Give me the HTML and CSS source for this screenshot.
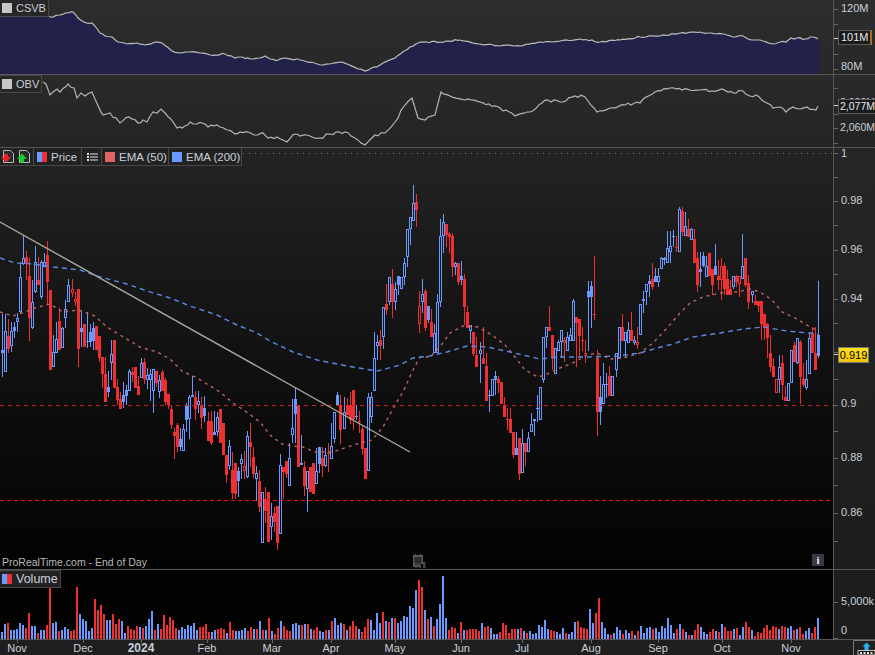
FILE: index.html
```html
<!DOCTYPE html>
<html>
<head>
    <title>ProRealTime Chart</title>
    <link rel="stylesheet" href="styles.css">
</head>
<body>
    <div class="chart">
        <section class="panel panel-csvb">
            <div class="plot">
                <svg id="csvb-plot" width="833" height="74" viewBox="0 0 833 74"></svg>
                <div class="legend legend-csvb"><span class="swatch swatch-grey"></span><span>CSVB</span></div>
            </div>
            <div class="scale" id="csvb-scale"></div>
        </section>

        <section class="panel panel-obv">
            <div class="plot">
                <svg id="obv-plot" width="833" height="72" viewBox="0 75 833 72"></svg>
                <div class="legend legend-obv"><span class="swatch swatch-grey"></span><span>OBV</span></div>
            </div>
            <div class="scale scale-obv" id="obv-scale"></div>
        </section>

        <section class="panel panel-price">
            <div class="plot">
                <svg id="price-plot" width="833" height="421" viewBox="0 148 833 421"></svg>
                <div class="toolbar">
                    <div class="tool-cell tool-icons">
                        <svg width="13" height="13" viewBox="0 0 13 13"><path d="M2.500 .5h7l3 3v9h-10z" fill="#2a2a2a" stroke="#b8b8b8"/><path d="M3 4h4v3h3l-5 5.500-5-5.500h3z" fill="#f0202a"/></svg>
                        <svg width="13" height="13" viewBox="0 0 13 13"><path d="M2.500 .5h7l3 3v9h-10z" fill="#2a2a2a" stroke="#b8b8b8"/><path d="M5 3.500l5 5.500h-3v3.500h-4v-3.500h-3z" fill="#12d02a"/></svg>
                    </div>
                    <div class="tool-cell tool-price"><span class="swatch swatch-split"></span><span>Price</span></div>
                    <div class="tool-cell tool-list">
                        <svg width="11" height="8" viewBox="0 0 11 8"><path d="M0 0h2v2h-2zM3 .5h8v1h-8zM0 3h2v2h-2zM3 3.500h8v1h-8zM0 6h2v2h-2zM3 6.500h8v1h-8z" fill="#e0e0e0"/></svg>
                    </div>
                    <div class="tool-cell tool-ema50"><span class="swatch swatch-ema50"></span><span>EMA (50)</span></div>
                    <div class="tool-cell tool-ema200"><span class="swatch swatch-ema200"></span><span>EMA (200)</span></div>
                </div>
                <div class="source">ProRealTime.com - End of Day</div>
                <svg class="calendar-icon" width="13" height="14" viewBox="0 0 13 14">
                    <path d="M0 1h2v-1h1v1h4v-1h1v1h2v9h-3v3h-7z" fill="#5a5a5a"/>
                    <path d="M1 4h8M1 6h8M1 8h8M3 3v8M5 3v8M7 3v8" stroke="#0a0a0a" stroke-width=".7"/>
                    <path d="M2 11h2v3h-2zM6 10h2v4h-2zM10 8h2.500v6h-2.500z" fill="#444"/>
                </svg>
                <div class="info-icon">i</div>
            </div>
            <div class="scale" id="price-scale"></div>
        </section>

        <section class="panel panel-volume">
            <div class="plot">
                <svg id="volume-plot" width="833" height="69" viewBox="0 570 833 69"></svg>
                <div class="legend legend-volume"><span class="swatch swatch-split"></span><span>Volume</span></div>
            </div>
            <div class="scale" id="volume-scale"></div>
        </section>

        <div class="time-axis" id="time-axis">
            <svg class="corner-icon" width="22" height="15" viewBox="0 0 22 15">
                <path d="M.5 15v-14.500h21.500" fill="none" stroke="#777"/>
                <path d="M13.500 2.500l4 4h-2v4h-4v-4h-2z" fill="#2ab4f0"/>
                <path d="M5 10.500h17v4.500h-17z" fill="#111" stroke="#ccc"/>
                <path d="M7 12h2v2h-2zM10.500 12h2v2h-2zM14 12h2v2h-2zM17.500 12h2v2h-2z" fill="#e8e8e8"/>
            </svg>
        </div>
    </div>
    <script src="chart.js"></script>
</body>
</html>
```

FILE: styles.css
```css
body { margin: 0; background: #1e1e1e; font-family: "Liberation Sans", Arial, sans-serif; font-size: 11px; color: #c8d0da; overflow: hidden; }
svg { display: block; }

.chart { width: 875px; height: 655px; display: flex; flex-direction: column; overflow: hidden; }
.panel { display: flex; flex: none; border-bottom: 1px solid #565656; }
.panel-csvb { height: 74px; background: linear-gradient(#2d2d2d, #282828); }
.panel-obv { height: 72px; background: linear-gradient(#2a2a2a, #242424); }
.panel-price { height: 421px; }
.panel-volume { height: 69px; }

.plot { position: relative; width: 833px; flex: none; border-right: 1px solid #565656; }
.panel-price .plot { background: linear-gradient(#242424, #1a1a1a 25%, #0c0c0c 65%, #030303); }
.panel-volume .plot { background: #030303; }
.scale { position: relative; flex: 1; overflow: hidden; }
.panel-price .scale { background: linear-gradient(#262626, #1d1d1d); }
.panel-volume .scale { background: #1d1d1d; }

.scale-label { position: absolute; left: 7px; white-space: nowrap; line-height: 14px; }
.scale-obv .scale-label { font-size: 10.500px; left: 6px; }
.scale-tick { position: absolute; left: 0; width: 4px; height: 1px; background: #666; }
.scale-tick-now { width: 5px; background: #d8d8d8; }
.scale-box { position: absolute; left: 4px; height: 13px; line-height: 13px; padding: 0 1px 0 2px; background: #1b1b1b; border: 1px solid #5c5c5c; color: #e4e8ee; white-space: nowrap; }
.scale-box-mark { border-right: 2px solid #b46a1e; }
.scale-obv .scale-box { font-size: 10.500px; padding: 0 0 0 1px; border-right: none; }
.scale-box-price { height: 14px; line-height: 14px; padding: 0; width: 29px; text-align: center; background: linear-gradient(#ffe21a, #f2c400); border-color: #7a7a7a; color: #000; }

.legend { position: absolute; left: 0; display: flex; align-items: center; gap: 4px; height: 16px; padding: 0 2px; background: #272727; border: 1px solid #484848; border-left: none; font-size: 11.500px; }
.legend-csvb { top: -1px; font-size: 11px; }
.legend-obv { top: 0; font-size: 11px; }
.legend-volume { top: 0; background: #222; font-size: 12.500px; }

.swatch { display: block; width: 10px; height: 10px; flex: none; }
.swatch-grey { background: #c6c6c6; }
.swatch-split { background: linear-gradient(90deg, #6a9aff 50%, #ee3030 50%); }
.swatch-ema50 { background: #e06464; }
.swatch-ema200 { background: #6a9aff; }

.toolbar { position: absolute; left: 0; top: 0; display: flex; height: 17px; background: #222; border-bottom: 1px solid #484848; font-size: 11.500px; }
.tool-cell { display: flex; align-items: center; gap: 4px; padding: 0 0 0 3px; box-sizing: border-box; border-right: 1px solid #484848; white-space: nowrap; }
.tool-icons { width: 34px; padding-left: 1px; gap: 3px; }
.tool-price { width: 48px; padding-left: 3px; }
.tool-list { width: 20px; padding-left: 5px; }
.tool-ema50 { width: 67px; }
.tool-ema200 { width: 73px; }

.source { position: absolute; left: 2px; bottom: 0; line-height: 14px; color: #b8b8b8; white-space: nowrap; font-size: 10.500px; }
.calendar-icon { position: absolute; left: 413px; top: 406px; }
.info-icon { position: absolute; left: 812px; top: 406px; width: 12px; height: 12px; background: #3a3a46; color: #eee; font: bold 11px/12px "Liberation Serif", serif; text-align: center; }

.time-axis { position: relative; flex: 1; background: #1f1f1f; }
.time-label { position: absolute; top: 1px; line-height: 14px; transform: translateX(-50%); }
.time-label-year { font-size: 12px; font-weight: bold; }
.time-tick { position: absolute; top: 0; width: 1px; height: 3px; background: #666; }
.corner-icon { position: absolute; right: 0; top: 0; }
```

FILE: chart.js
```js
// candle types
const H = 0; // hollow blue (up)
const R = 1; // solid red (down)
const B = 2; // solid blue
const O = 3; // hollow red

const BLUE = '#6a9aff';
const RED = '#ee3030';

// [bodyTop, bodyBottom, type, wickTop, wickBottom] in page pixels
const candles = [
    // Nov - Dec
    [350,353,B,314,377],[331,372,H,314,372],[336,349,R,319,353],[331,346,H,322,352],[327,331,B,322,338],[318,322,H,313,332],
    [277,312,H,262,313],[258,264,H,236,265],[257,264,R,251,280],[276,318,R,258,341],[302,328,H,280,329],[262,292,H,246,293],
    [280,285,R,257,285],[262,297,H,260,299],[262,267,H,253,267],[255,282,R,241,305],[290,370,R],[352,367,H,335,367],
    [339,353,H,322,353],[321,350,R,308,350],[328,348,H,327,348],[309,318,H,300,328],[285,302,H,279,302],[289,293,O,279,297],
    [299,302,O,292,306],[289,349,R,289,367],[328,332,B,310,347],[324,347,R],[341,342,H,312,348],[332,342,B,324,347],
    [328,341,B,322,350],[326,350,R],[336,358,R,336,362],[357,374,R,357,388],[374,402,R,357,402],[387,392,B,371,397],
    [354,363,H,340,380],[340,388,R],[387,400,R,379,405],[399,409,R,392,409],[395,402,B,382,408],[390,396,B,385,405],
    [371,391,H,369,391],[372,375,R,367,382],[367,388,R],[386,395,R,376,395],[363,378,H,358,378],[362,379,R,358,384],
    [375,380,H,368,389],[374,380,H,369,401],[369,391,H,369,413],[371,383,R,371,387],[380,392,H,375,398],[372,391,R,370,391],
    [380,402,R,378,405],[394,405,R,394,409],[409,425,R,405,429],[432,436,R,428,459],[425,447,R,423,452],[439,447,B,428,451],
    [429,451,H,424,451],[406,420,B,403,432],[397,419,H,395,439],[395,397,B,376,397],[397,409,R,391,420],[401,405,H,391,413],
    [406,418,R,397,429],[408,416,B,396,422],[421,441,R,412,441],[421,443,R,411,445],[432,435,B,411,435],[417,432,H,412,436],
    [409,443,R],
    // Feb - Mar
    [423,455,R],[455,475,R,455,483],[446,466,H,440,470],[470,493,R,452,499],[463,494,R,463,499],[471,481,B,467,497],
    [459,464,H,454,479],[466,471,O,451,479],[436,477,H,431,478],[442,447,R,423,467],[457,474,R,447,478],[473,479,H,466,501],
    [481,507,R,470,512],[492,543,H],[499,511,R,487,523],[492,542,R],[516,527,H,503,540],[513,522,R,507,532],
    [506,543,R,506,550],[465,534,H,454,534],[467,472,R,467,499],[461,474,R,461,478],[458,486,H,443,486],[428,435,H,399,443],
    [399,414,B,388,443],[405,467,R],[463,465,H,435,465],[467,486,R,461,496],[471,489,H,471,512],[467,492,R],
    [463,494,R],[471,484,H,448,484],[447,464,B,447,473],[458,466,R,447,477],[455,466,H,448,467],[453,454,R,443,472],
    [446,459,H,423,459],[412,439,H,412,443],[395,405,B,392,405],[405,430,R,395,444],[412,429,H,397,429],[405,415,R,398,415],
    [405,420,R,392,424],[390,419,R,390,430],[416,417,H,405,420],[421,422,R,411,433],[429,449,R,425,455],[448,479,R],
    [397,471,H,393,471],[397,417,H,392,423],[358,391,H,332,391],
    // Apr - May
    [342,346,H,335,360],[340,346,R,330,360],[307,337,H,307,349],[304,310,R,284,315],[277,302,H,277,305],[284,302,R,269,318],
    [289,302,H,282,310],[276,285,B,276,295],[277,289,H,277,285],[263,277,H,258,285],[229,257,H,229,267],[217,229,H,217,245],
    [203,221,H,185,221],[202,210,R,194,227],[306,324,O,291,333],[294,302,H,279,313],[291,328,R,289,331],[306,320,B,306,323],
    [322,337,R,309,337],[333,353,H,324,353],[302,353,H,294,353],[236,302,H,219,307],[222,236,H,214,253],[224,235,R,224,247],
    [234,237,R,232,253],[236,267,R,233,277],[263,267,H,262,275],[263,282,R,263,285],[276,280,B,261,285],[279,307,R,274,325],
    // Jun
    [312,328,R,306,328],[325,331,H,325,343],[332,354,R,332,356],[355,367,R,337,367],[350,354,H,342,383],[358,364,R,327,364],
    [366,401,R,353,401],[395,396,H,390,412],[379,396,H,379,396],[376,380,B,371,395],[379,383,R,376,393],[382,404,R],
    [405,417,R,397,417],[419,420,R,408,430],[419,433,R,408,433],[432,455,R,432,458],[448,455,B,432,455],[438,474,R,438,480],
    [443,473,H,429,473],[443,452,R,443,466],[438,452,H,432,452],[424,432,H,413,432],[419,421,H,419,436],[408,409,H,395,422],
    // Jul
    [387,420,H],[337,380,H,337,383],[327,337,H,327,348],[327,331,R,306,331],[335,358,R,335,370],[348,374,H],
    [342,351,H,340,351],[330,342,H,330,357],[340,343,O,337,362],[337,351,H,332,351],[335,341,H,328,341],[301,341,H,299,341],
    [317,323,R,317,367],[319,336,R,319,357],[340,341,R,327,351],[353,354,R,340,363],[291,297,B,281,351],[286,297,B,281,328],
    // Aug
    [314,315,R,256,320],[358,412,R,350,436],[397,412,B,376,425],[384,404,H,363,404],[384,385,H,373,398],[376,396,R,366,396],
    [376,396,H],[353,370,H,353,377],[327,358,H],[327,341,R,314,341],[332,341,H,332,357],[330,343,H,322,343],
    [330,341,R,312,341],[340,343,H,336,345],[342,345,O,327,349],[304,335,H],[299,301,H,291,313],[284,292,H,284,305],
    [281,284,B,275,297],
    // Sep
    [279,287,R,263,290],[276,282,B,268,282],[276,282,H,268,287],[258,269,H,257,269],[258,260,B,257,265],[248,263,H,231,263],
    [246,252,H,231,263],[236,237,H,230,247],[247,248,R,236,252],[209,252,H,207,252],[211,232,R,207,236],[226,236,H,212,236],
    [229,237,R,219,237],[229,240,H,228,240],[239,263,R,229,263],[258,285,R,252,292],[269,272,B,252,287],[256,266,B,252,267],
    [266,277,H,256,277],[253,276,R,253,276],[269,285,R,269,295],[266,275,B,244,275],[276,280,R,260,290],
    // Oct
    [266,280,O,258,300],[266,289,R,263,295],[279,295,R,270,295],[289,295,R,280,295],[276,287,H,276,289],[276,282,R,275,287],
    [276,284,O,276,297],[266,279,H,234,279],[258,285,R,258,287],[283,302,R,275,309],[291,295,H,291,303],[301,305,R,295,305],
    [301,306,R,301,312],[301,324,R,301,340],[314,328,R,314,340],[324,338,R,323,358],[353,367,R,335,372],[366,377,R,358,377],
    // Nov
    [379,393,O,379,393],[367,380,H,355,393],[363,385,R,355,400],[397,401,R,386,401],[383,401,H],[350,383,H],
    [345,362,R,342,362],[338,363,H,338,364],[342,377,R,340,404],[379,385,R,363,387],[379,388,H,360,390],[338,374,H,332,374],
    [333,353,R,327,353],[353,370,R,327,370],[335,356,B,281,358]
];

// candle-by-candle volume in pixels, positive blue, negative red
const volumes = [
    7,15,-16,9,9,10,16,14,-11,-26,13,13,-6,9,9,-14,-52,16,17,-8,9,12,10,-8,-9,-52,25,20,18,8,11,-40,-29,-34,-25,19,19,-25,-15,-20,
    18,6,-13,-10,-9,-13,12,-11,13,20,28,-9,15,-10,-24,-14,-22,-19,-11,9,12,10,14,13,16,9,-12,-12,-15,-7,7,9,-10,-11,-10,6,-17,-9,8,8,
    9,11,-8,-12,10,-10,18,-9,9,-21,8,-5,-11,18,-13,-9,-8,15,16,14,
    -14,15,-15,10,-9,-12,8,7,-9,9,-18,21,14,16,-15,9,-13,-18,-13,10,-7,-12,-20,19,9,26,16,-27,18,-17,21,-21,16,18,23,22,33,31,49,-59,
    -52,29,-20,22,-13,20,35,63,21,-9,-12,-11,6,-17,9,-9,-10,-10,-10,-8,16,-12,-13,11,5,5,-7,-16,-14,-6,-10,-10,10,-11,8,-6,8,5,6,14,
    12,19,10,-9,-8,7,5,11,-6,5,7,17,-18,-12,-11,-10,30,16,-26,-41,17,11,5,-4,6,12,9,-5,9,6,-8,4,-8,13,6,11,12,
    -10,11,7,13,11,21,14,6,-10,15,-10,7,-4,4,-9,-15,12,7,5,-7,-10,8,-7,15,-12,-8,-8,10,-11,4,12,-17,-12,9,-3,-7,-6,-11,-14,-9,
    -13,-12,10,-13,-12,11,13,-9,10,-12,-5,8,11,-6,-12,21
];

const csvbKeys = [[0,15],[48,16],[50,17],[60,15],[68,13],[73,12],[78,18],[84,22],[92,23],[100,33],[105,36],[112,37],[118,42],[127,44],[137,43],[145,45],
    [155,42],[162,43],[172,51],[180,53],[190,52],[200,53],[210,55],[225,54],[235,58],[242,57],[250,59],[260,58],[265,56],[270,59],[278,60],[285,58],[300,60],
    [320,65],[340,62],[365,71],[380,65],[395,58],[410,47],[420,42],[440,42],[460,40],[480,44],[500,46],[520,46],[540,42],[560,41],[580,39],[600,42],
    [620,40],[640,37],[660,36],[680,33],[700,32],[708,33],[716,34],[724,34],[735,37],[743,36],[748,39],[760,40],[773,44],[780,42],[786,42],[791,38],
    [794,39],[797,38],[805,39],[810,37],[818,39]];

const obvKeys = [[43,82],[46,84],[50,95],[57,89],[60,92],[68,84],[74,88],[77,98],[81,93],[85,96],[92,92],[103,115],[110,113],[120,123],[129,117],[138,123],
    [143,120],[147,122],[153,112],[157,113],[161,109],[165,113],[177,128],[182,128],[190,122],[197,124],[202,123],[208,127],[217,125],[227,130],[235,134],
    [240,132],[248,132],[258,135],[263,133],[268,138],[277,137],[287,142],[295,134],[300,136],[310,136],[320,138],[330,134],[345,132],[355,138],[365,145],
    [375,135],[385,133],[395,122],[405,105],[412,98],[418,118],[425,120],[435,115],[441,92],[450,96],[465,100],[480,102],[500,108],[515,116],[530,112],
    [545,100],[560,102],[575,96],[585,97],[597,112],[610,108],[625,105],[640,103],[655,92],[670,88],[700,90],[712,91],[722,89],[733,93],[743,91],[750,96],
    [756,95],[765,102],[773,108],[780,107],[786,112],[793,107],[800,109],[807,107],[816,110],[818,106]];

const ema50 = [[0,312],[13,316],[22,313],[35,308],[50,304],[63,312],[78,310],[95,316],[107,327],[120,335],[140,347],[157,352],[170,359],[182,371],[197,378],
    [220,392],[233,403],[248,413],[260,422],[270,435],[282,444],[292,446],[303,447],[315,452],[333,452],[347,447],[360,443],[372,440],[383,427],[395,405],
    [403,392],[413,370],[420,357],[430,357],[440,347],[450,333],[463,326],[478,327],[492,335],[505,345],[515,357],[525,370],[538,377],[545,375],[560,368],
    [575,362],[587,355],[597,353],[610,359],[623,358],[640,353],[653,343],[668,327],[680,313],[690,303],[703,297],[720,293],[737,292],[750,289],[760,292],
    [772,300],[782,312],[797,319],[810,327],[818,331]];

const ema200 = [[0,258],[15,263],[33,264],[53,267],[80,270],[100,277],[127,284],[147,291],[170,298],[190,306],[217,315],[237,325],[257,333],[270,341],[293,352],
    [317,360],[347,366],[377,371],[400,365],[413,358],[430,356],[447,352],[467,346],[487,347],[510,352],[540,359],[560,357],[587,357],[617,356],[640,353],
    [657,348],[673,344],[693,337],[720,333],[743,329],[763,327],[787,331],[818,334]];

function points(line) {
    return line.map(p => p.join(',')).join(' ');
}

// fill in a day-by-day line between the key points, with a small wobble
function roughen(keys, size) {
    let seed = 17;
    const line = [];
    for (let i = 0; i < keys.length - 1; i++) {
        const [x0, y0] = keys[i];
        const [x1, y1] = keys[i + 1];
        line.push([x0, y0]);
        for (let x = x0 + 3; x < x1 - 1; x += 3) {
            seed = (seed * 137 + 59) % 1009;
            const wobble = (seed / 1009 - 0.5) * size;
            line.push([x, +(y0 + (y1 - y0) * (x - x0) / (x1 - x0) + wobble).toFixed(1)]);
        }
    }
    line.push(keys[keys.length - 1]);
    return line;
}

function drawArea() {
    const line = roughen(csvbKeys, 1.6);
    const fill = [[0,74]].concat(line, [[819,39],[819,74]]);
    document.getElementById('csvb-plot').innerHTML =
        `<polygon points="${points(fill)}" fill="#21214a"/>` +
        `<polyline points="${points(line)}" fill="none" stroke="#bcbcbc" stroke-width="1.2"/>`;
}

function drawObv() {
    document.getElementById('obv-plot').innerHTML =
        `<polyline points="${points(roughen(obvKeys, 3))}" fill="none" stroke="#b4b4b4" stroke-width="1.2"/>`;
}

function candleSvg(c, x) {
    const [top, bottom, type] = c;
    const high = c[3] === undefined ? top : c[3];
    const low = c[4] === undefined ? bottom : c[4];
    const colour = type === H || type === B ? BLUE : RED;
    let out = '';
    if (high < top) out += `<rect x="${x}" y="${high}" width="1" height="${top - high}" fill="${colour}"/>`;
    if (low > bottom) out += `<rect x="${x}" y="${bottom}" width="1" height="${low - bottom}" fill="${colour}"/>`;
    if (type === R || type === B || bottom - top < 3) {
        out += `<rect x="${x - 1}" y="${top}" width="3" height="${Math.max(bottom - top, 1)}" fill="${colour}"/>`;
    } else {
        out += `<rect x="${x - 0.5}" y="${top + 0.5}" width="2" height="${bottom - top - 1}" fill="none" stroke="${colour}"/>`;
    }
    return out;
}

function drawPrice() {
    const step = 816 / (candles.length - 1);
    let body = '<g shape-rendering="crispEdges">';
    candles.forEach((c, i) => { body += candleSvg(c, Math.round(2 + i * step)); });
    body += '</g>';
    document.getElementById('price-plot').innerHTML =
        '<line x1="243" y1="153.5" x2="833" y2="153.5" stroke="#777" stroke-dasharray="1 5"/>' +
        body +
        `<polyline points="${points(ema50)}" fill="none" stroke="#bc6464" stroke-width="1.4" stroke-dasharray="3 4"/>` +
        `<polyline points="${points(ema200)}" fill="none" stroke="#5a8ae4" stroke-width="1.4" stroke-dasharray="5 4"/>` +
        '<line x1="0" y1="405.5" x2="833" y2="405.5" stroke="#c02222" stroke-dasharray="4 4"/>' +
        '<line x1="0" y1="500.5" x2="833" y2="500.5" stroke="#ea1010" stroke-dasharray="4 3"/>' +
        '<line x1="0" y1="222" x2="410" y2="452" stroke="#a8a8a0" stroke-width="1.4"/>';
}

function drawVolume() {
    const step = 816 / (volumes.length - 1);
    let out = '<g shape-rendering="crispEdges">';
    volumes.forEach((v, i) => {
        const h = Math.abs(v);
        const x = Math.round(1 + i * step);
        out += `<rect x="${x}" y="${639 - h}" width="2" height="${h}" fill="${v > 0 ? BLUE : RED}"/>`;
    });
    document.getElementById('volume-plot').innerHTML = out + '</g>';
}

function addTo(parent, cls, y, text) {
    const el = document.createElement('div');
    el.className = cls;
    el.style.top = y + 'px';
    if (text) el.textContent = text;
    document.getElementById(parent).appendChild(el);
}

// scale labels: [panel, top of panel, labels, tick positions]
function drawScales() {
    const scales = [
        ['csvb-scale', 0, [[1,'120M'],[59,'80M']], [9,24,54,69]],
        ['obv-scale', 75, [[20,'2,080M'],[45,'2,060M']], [88,128,143,114]],
        ['price-scale', 148, [[-2,'1'],[45,'0.98'],[94,'0.96'],[143,'0.94'],[248,'0.9'],[302,'0.88'],[357,'0.86']],
            [153,177,201,225,250,274,299,323,352,379,405,431,458,485,513,541]],
        ['volume-scale', 570, [[24,'5,000k'],[53,'0']], [602,638]]
    ];
    scales.forEach(([id, top, labels, ticks]) => {
        ticks.forEach(y => addTo(id, 'scale-tick', y - top));
        labels.forEach(([y, text]) => addTo(id, 'scale-label', y, text));
    });

    addTo('csvb-scale', 'scale-tick scale-tick-now', 38);
    addTo('csvb-scale', 'scale-box scale-box-mark', 30, '101M');
    addTo('obv-scale', 'scale-tick scale-tick-now', 30);
    addTo('obv-scale', 'scale-box', 24, '2,077M');
    addTo('price-scale', 'scale-tick scale-tick-now', 206);
    addTo('price-scale', 'scale-box scale-box-price', 199, '0.919');
}

function drawTimeAxis() {
    const months = [[17,'Nov'],[83,'Dec'],[141,'2024'],[207,'Feb'],[272,'Mar'],[331,'Apr'],[395,'May'],[461,'Jun'],
        [522,'Jul'],[591,'Aug'],[658,'Sep'],[722,'Oct'],[791,'Nov']];
    const axis = document.getElementById('time-axis');
    months.forEach(([x, text]) => {
        const tick = document.createElement('div');
        tick.className = 'time-tick';
        tick.style.left = x + 'px';
        axis.appendChild(tick);
        const label = document.createElement('div');
        label.className = text === '2024' ? 'time-label time-label-year' : 'time-label';
        label.style.left = x + 'px';
        label.textContent = text;
        axis.appendChild(label);
    });
}

drawArea();
drawObv();
drawPrice();
drawVolume();
drawScales();
drawTimeAxis();
```
